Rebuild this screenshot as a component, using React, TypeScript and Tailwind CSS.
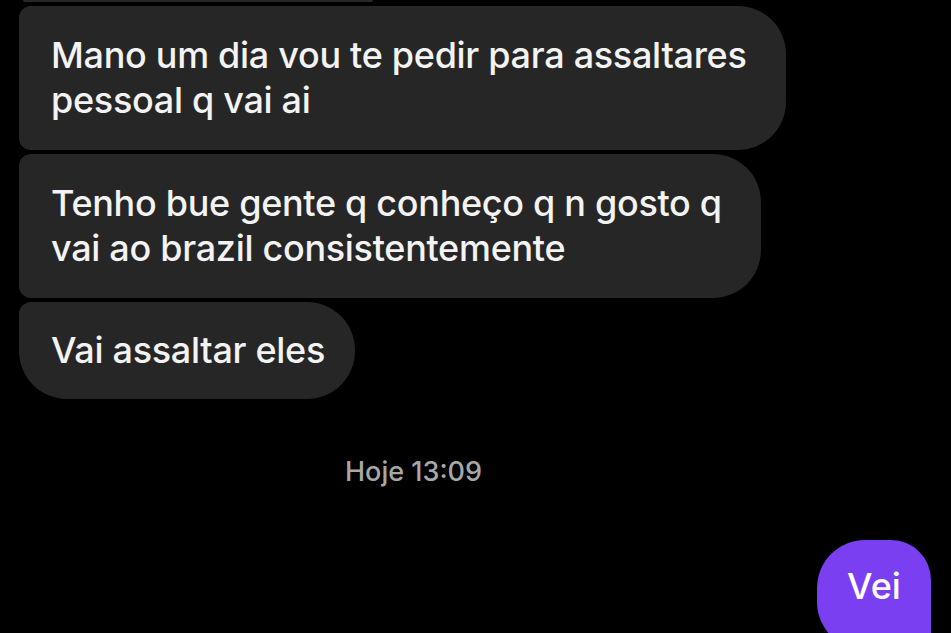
import React from "react";

const font = { fontFamily: "Inter, 'Noto Sans', sans-serif" };

function Bubble({ children, className }: { children: React.ReactNode; className: string }) {
  return (
    <div
      className={`w-fit bg-[#262626] text-[#f3f3f3] text-[36px] font-medium leading-[45px] tracking-[-0.3px] pl-[32px] pr-[39px] py-[27px] ${className}`}
    >
      {children}
    </div>
  );
}

export default function App() {
  return (
    <div className="w-[951px] h-[633px] overflow-hidden bg-black" style={font}>
      <div className="flex flex-col pl-[19px]">
        <div className="h-[2px] w-[350px] ml-[4px] bg-[#262626] rounded-b-[2px]" />
        <div className="flex flex-col gap-[4px] mt-[4px]">
          <Bubble className="rounded-l-[12px] rounded-r-[48px]">
            Mano um dia vou te pedir para assaltares
            <br />
            pessoal q vai ai
          </Bubble>
          <Bubble className="rounded-l-[12px] rounded-r-[48px]">
            Tenho bue gente q conheço q n gosto q
            <br />
            vai ao brazil consistentemente
          </Bubble>
          <Bubble className="rounded-tl-[12px] rounded-bl-[48px] rounded-r-[48px] !pr-[30px] !py-[26px]">
            Vai assaltar eles
          </Bubble>
        </div>
      </div>
      <div className="mt-[58px] pl-[345px] text-[27px] font-medium leading-[30px] text-[#a8a8a8]">Hoje 13:09</div>
      <div className="flex justify-end pr-[20px] mt-[53px]">
        <div className="w-[114px] h-[110px] bg-[#7b3ff2] text-white text-[36px] font-medium leading-[45px] flex justify-center pt-[24px] rounded-tl-[48px] rounded-tr-[40px] rounded-bl-[48px] rounded-br-[8px]">
          Vei
        </div>
      </div>
    </div>
  );
}
